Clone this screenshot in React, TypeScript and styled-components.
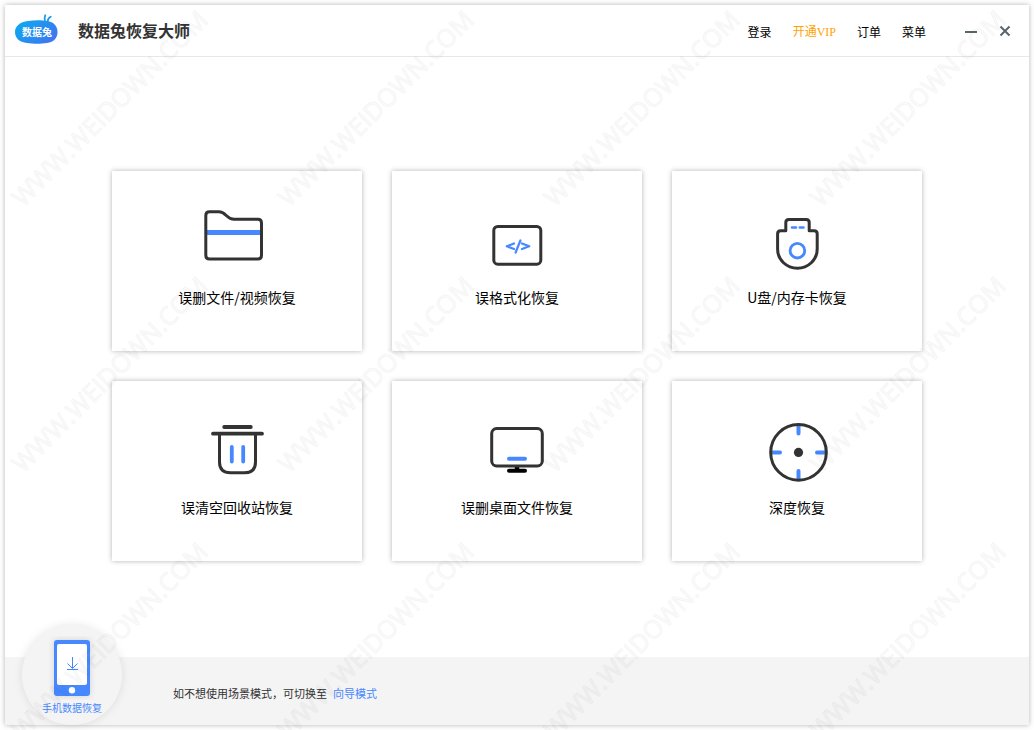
import React from "react";
import styled, { createGlobalStyle } from "styled-components";

const BLUE = "#4788ff";
const INK = "#333333";

const GlobalStyle = createGlobalStyle`
  * { box-sizing: border-box; }
  body {
    margin: 0;
    background: #ffffff;
    color: #000000;
    font-family: "Noto Sans CJK SC", sans-serif;
  }
  button { font: inherit; color: inherit; background: none; border: 0; padding: 0; cursor: pointer; }
  a { color: inherit; text-decoration: none; }
`;

const Page = styled.div`
  min-height: 100vh;
  display: flex;
  padding: 5px;
`;

const AppWindow = styled.div`
  flex: 1;
  min-width: 0;
  display: flex;
  flex-direction: column;
  background: #ffffff;
  box-shadow: 0 0 5px rgba(0, 0, 0, 0.3);
`;

const Header = styled.header`
  height: 52px;
  flex: none;
  display: flex;
  align-items: center;
  justify-content: space-between;
  padding: 0 17px 0 10px;
  border-bottom: 1px solid #e4e7ee;
`;

const Brand = styled.div`
  display: flex;
  align-items: center;
  gap: 20px;
  padding-bottom: 2px;
`;

const Title = styled.h1`
  margin: 0;
  font-size: 16px;
  line-height: 24px;
  font-weight: 700;
  color: ${INK};
`;

const HeaderActions = styled.div`
  display: flex;
  align-items: center;
  gap: 38px;
`;

const Nav = styled.nav`
  display: flex;
  align-items: center;
  gap: 21px;
  padding-top: 2px;
`;

const NavLink = styled.a<{ $highlight?: boolean }>`
  font-family: ${(p) => (p.$highlight ? '"Liberation Serif", "Noto Sans CJK SC", serif' : "inherit")};
  font-size: 12px;
  line-height: 20px;
  color: ${(p) => (p.$highlight ? "#ffa200" : "#000000")};
`;

const WindowControls = styled.div`
  display: flex;
  gap: 20px;
`;

const ControlButton = styled.button`
  width: 14px;
  height: 14px;
  display: flex;
`;

const Main = styled.main`
  flex: 1;
  display: flex;
  justify-content: center;
  align-items: flex-start;
  padding: 114px 20px 90px;
`;

const CardGrid = styled.div`
  display: grid;
  grid-template-columns: repeat(3, 250px);
  gap: 30px;
`;

const Card = styled.button`
  height: 180px;
  display: flex;
  flex-direction: column;
  align-items: center;
  padding-top: 36px;
  gap: 8px;
  background: #ffffff;
  box-shadow: 0 0 5px rgba(0, 0, 0, 0.3);
`;

const CardLabel = styled.span`
  font-size: 14px;
  line-height: 20px;
`;

const Footer = styled.footer`
  position: relative;
  height: 68px;
  flex: none;
  display: flex;
  align-items: center;
  padding: 4px 20px 0 168px;
  background: #f4f4f4;
`;

const FooterText = styled.p`
  margin: 0;
  display: flex;
  gap: 6px;
  font-size: 11px;
  line-height: 18px;
  color: ${INK};
`;

const ModeLink = styled.a`
  color: ${BLUE};
`;

const PhoneBadge = styled.button`
  position: absolute;
  left: 17px;
  bottom: 0;
  width: 100px;
  height: 100px;
  border-radius: 50%;
  background: #f4f4f4;
  box-shadow: 0 0 10px rgba(0, 0, 0, 0.1);
  display: flex;
  flex-direction: column;
  align-items: center;
  padding-top: 11px;
  color: ${BLUE};
  font-size: 10px;
  line-height: 16px;
`;

const WatermarkLayer = styled.svg`
  position: fixed;
  inset: 0;
  width: 100%;
  height: 100%;
  pointer-events: none;
`;

const IconCanvas = styled.svg.attrs({ width: 80, height: 72, viewBox: "0 0 80 72", "aria-hidden": true })`
  flex: none;
  fill: none;
  stroke: ${INK};
  stroke-width: 3;
  stroke-linecap: round;
  stroke-linejoin: round;
`;

const Logo = () => (
  <svg width="43" height="32" viewBox="0 0 43 32" role="img" aria-label="数据兔">
    <defs>
      <linearGradient id="logoFill" x1="0" y1="0" x2="1" y2="0.6">
        <stop offset="0" stopColor="#06aef2" />
        <stop offset="1" stopColor="#3d78f0" />
      </linearGradient>
    </defs>
    <path
      d="M13 7 C19 6 27 6 32 7 C39 8 42.5 12 42.5 18 C42.5 24 39 28 32 29 C26 30 18 30 12 29 C4 28 0 24 0 18 C0 12 5 8 13 7 Z"
      fill="url(#logoFill)"
    />
    <path d="M30 7.5 C29.3 5 29.5 3 30.3 1.2" fill="none" stroke="#18a0e8" strokeWidth="1.8" strokeLinecap="round" />
    <path d="M32.5 7.5 C33 5 34 3.5 35.7 2.7" fill="none" stroke="#1c98ea" strokeWidth="1.8" strokeLinecap="round" />
    <text x="7" y="22" fontSize="10" fontWeight="700" fill="#ffffff" fontFamily="Noto Sans CJK SC, sans-serif">
      数据兔
    </text>
  </svg>
);

const FolderIcon = () => (
  <IconCanvas>
    <path d="M10 25.5 H63" stroke={BLUE} strokeWidth="5" strokeLinecap="butt" />
    <path d="M12.5 4.8 H22 C29 4.8 29.5 12.3 37 12.3 H60.8 Q64.5 12.3 64.5 16 V48.3 Q64.5 52 60.8 52 H12.5 Q8.8 52 8.8 48.3 V8.5 Q8.8 4.8 12.5 4.8 Z" />
  </IconCanvas>
);

const CodeIcon = () => (
  <IconCanvas>
    <rect x="16.8" y="19.5" width="47" height="37.7" rx="4" />
    <path d="M37 36.5 L29.8 39.3 L37 42 M45 36.5 L52.2 39.3 L45 42 M43.4 33.5 L38.6 45.5" stroke={BLUE} strokeWidth="2.2" />
  </IconCanvas>
);

const UsbIcon = () => (
  <IconCanvas>
    <path d="M28.8 23.7 V15.5 Q28.8 12.5 31.8 12.5 H49.2 Q52.2 12.5 52.2 15.5 V23.7 H57.2 Q60.2 23.7 60.2 26.7 V42 C60.2 53 51 61.2 40.4 61.2 C29.8 61.2 20.6 53 20.6 42 V26.7 Q20.6 23.7 23.6 23.7 Z" />
    <path d="M35 20.5 H39 M42.8 20.5 H46.5" stroke={BLUE} strokeWidth="2.6" />
    <circle cx="40.4" cy="43.7" r="7.3" stroke={BLUE} strokeWidth="2.8" />
  </IconCanvas>
);

const TrashIcon = () => (
  <IconCanvas>
    <path d="M27.2 10 H53.8 M16 16.7 H65" strokeWidth="3.8" />
    <path d="M22.5 17 V45 Q22.5 55.8 33.5 55.8 H47.5 Q58.5 55.8 58.5 45 V17" />
    <path d="M34.8 30 V44.5 M46.2 30 V44.5" stroke={BLUE} strokeWidth="3.8" />
  </IconCanvas>
);

const MonitorIcon = () => (
  <IconCanvas>
    <path d="M40 49 V53" stroke="#000000" strokeWidth="4.5" strokeLinecap="butt" />
    <rect x="14.7" y="11.6" width="50.6" height="37.4" rx="5" />
    <path d="M32 41.8 H48" stroke={BLUE} strokeWidth="4" />
    <path d="M32 53.7 H48" stroke="#000000" strokeWidth="4" />
  </IconCanvas>
);

const TargetIcon = () => (
  <IconCanvas>
    <path d="M41.5 9 V16.5 M41.5 61.5 V54 M15.5 35.5 H23 M67.5 35.5 H60" stroke={BLUE} strokeWidth="4" />
    <circle cx="41.5" cy="35.4" r="27.8" />
    <circle cx="41.5" cy="35.4" r="4.6" fill={INK} stroke="none" />
  </IconCanvas>
);

const PhoneIcon = () => (
  <svg width="48" height="64" viewBox="0 0 48 64" aria-hidden="true">
    <defs>
      <filter id="phoneShadow" x="-30%" y="-20%" width="160%" height="140%">
        <feDropShadow dx="0" dy="0" stdDeviation="3" floodColor="#000000" floodOpacity="0.15" />
      </filter>
    </defs>
    <rect x="6" y="4" width="36" height="56" rx="3" fill={BLUE} filter="url(#phoneShadow)" />
    <rect x="9" y="8" width="30" height="41" rx="2" fill="#ffffff" />
    <circle cx="24" cy="54.3" r="3.2" fill="#ffffff" />
    <path d="M24.5 21 V32 M19.5 27.5 L24.5 32.5 L29.5 27.5 M19 33.5 H30" fill="none" stroke={BLUE} />
  </svg>
);

const Watermark = () => (
  <WatermarkLayer aria-hidden="true">
    <defs>
      <pattern id="siteMark" width="266" height="266" patternUnits="userSpaceOnUse">
        <text
          transform="translate(23 208) rotate(-45)"
          fontFamily="Open Sans, sans-serif"
          fontSize="25"
          fontWeight="500"
          fill="#000000"
          fillOpacity="0.01"
          stroke="#000000"
          strokeOpacity="0.03"
          strokeWidth="1"
        >
          WWW.WEIDOWN.COM
        </text>
      </pattern>
    </defs>
    <rect width="100%" height="100%" fill="url(#siteMark)" />
  </WatermarkLayer>
);

const cards = [
  { label: "误删文件/视频恢复", Icon: FolderIcon },
  { label: "误格式化恢复", Icon: CodeIcon },
  { label: "U盘/内存卡恢复", Icon: UsbIcon },
  { label: "误清空回收站恢复", Icon: TrashIcon },
  { label: "误删桌面文件恢复", Icon: MonitorIcon },
  { label: "深度恢复", Icon: TargetIcon },
];

export default function App() {
  return (
    <Page>
      <GlobalStyle />
      <AppWindow>
        <Header>
          <Brand>
            <Logo />
            <Title>数据兔恢复大师</Title>
          </Brand>
          <HeaderActions>
            <Nav>
              <NavLink href="#login">登录</NavLink>
              <NavLink href="#vip" $highlight>开通VIP</NavLink>
              <NavLink href="#orders">订单</NavLink>
              <NavLink href="#menu">菜单</NavLink>
            </Nav>
            <WindowControls>
              <ControlButton aria-label="最小化">
                <svg width="14" height="14" viewBox="0 0 14 14">
                  <path d="M1 8 H13" stroke="#5a646b" strokeWidth="2" />
                </svg>
              </ControlButton>
              <ControlButton aria-label="关闭">
                <svg width="14" height="14" viewBox="0 0 14 14">
                  <path d="M2.5 2.5 L11.5 11.5 M11.5 2.5 L2.5 11.5" stroke="#5a646b" strokeWidth="2" />
                </svg>
              </ControlButton>
            </WindowControls>
          </HeaderActions>
        </Header>
        <Main>
          <CardGrid>
            {cards.map(({ label, Icon }) => (
              <Card key={label}>
                <Icon />
                <CardLabel>{label}</CardLabel>
              </Card>
            ))}
          </CardGrid>
        </Main>
        <Footer>
          <PhoneBadge>
            <PhoneIcon />
            手机数据恢复
          </PhoneBadge>
          <FooterText>
            如不想使用场景模式，可切换至
            <ModeLink href="#wizard">向导模式</ModeLink>
          </FooterText>
        </Footer>
      </AppWindow>
      <Watermark />
    </Page>
  );
}
